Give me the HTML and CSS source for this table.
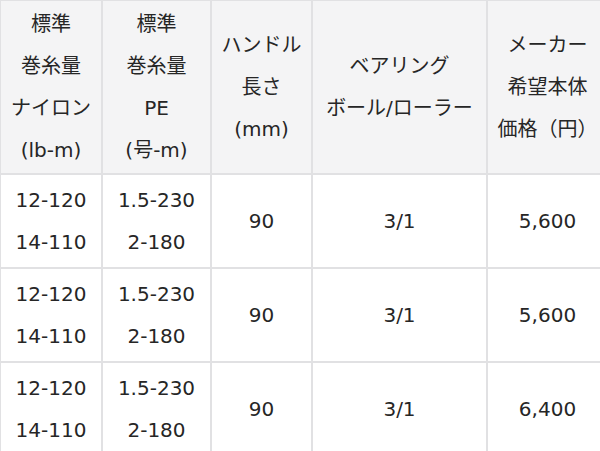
FILE: index.html
```html
<!DOCTYPE html>
<html lang="ja">
<head>
<meta charset="utf-8">
<link rel="stylesheet" href="styles.css">
</head>
<body>
<table class="spec">
  <colgroup>
    <col class="c1"><col class="c2"><col class="c3"><col class="c4"><col class="c5">
  </colgroup>
  <thead>
    <tr>
      <th>標準<br>巻糸量<br>ナイロン<br>(lb-m)</th>
      <th>標準<br>巻糸量<br>PE<br>(号-m)</th>
      <th>ハンドル<br>長さ<br>(mm)</th>
      <th>ベアリング<br>ボール/ローラー</th>
      <th>メーカー<br>希望本体<br>価格（円）</th>
    </tr>
  </thead>
  <tbody>
    <tr>
      <td>12-120<br>14-110</td>
      <td>1.5-230<br>2-180</td>
      <td>90</td>
      <td>3/1</td>
      <td>5,600</td>
    </tr>
    <tr>
      <td>12-120<br>14-110</td>
      <td>1.5-230<br>2-180</td>
      <td>90</td>
      <td>3/1</td>
      <td>5,600</td>
    </tr>
    <tr>
      <td>12-120<br>14-110</td>
      <td>1.5-230<br>2-180</td>
      <td>90</td>
      <td>3/1</td>
      <td>6,400</td>
    </tr>
  </tbody>
</table>
</body>
</html>
```
FILE: styles.css
```css
html, body {
  margin: 0;
  padding: 0;
  background: #ffffff;
  overflow: hidden;
}
body {
  width: 600px;
  height: 451px;
}
.spec {
  border-collapse: collapse;
  table-layout: fixed;
  width: 608px;
  margin-left: -1px;
  margin-top: -1px;
  font-family: "DejaVu Sans", "Noto Sans CJK JP", sans-serif;
  font-size: 20px;
  line-height: 42px;
  color: #262626;
}
.c1 { width: 102px; }
.c2 { width: 109px; }
.c3 { width: 101px; }
.c4 { width: 175px; }
.c5 { width: 121px; }
.spec th,
.spec td {
  border: 2px solid #e1e1e3;
  text-align: center;
  vertical-align: middle;
  font-weight: normal;
  padding: 0;
}
.spec th {
  background: #f4f4f5;
  height: 172px;
}
.spec td {
  height: 92px;
}
```
